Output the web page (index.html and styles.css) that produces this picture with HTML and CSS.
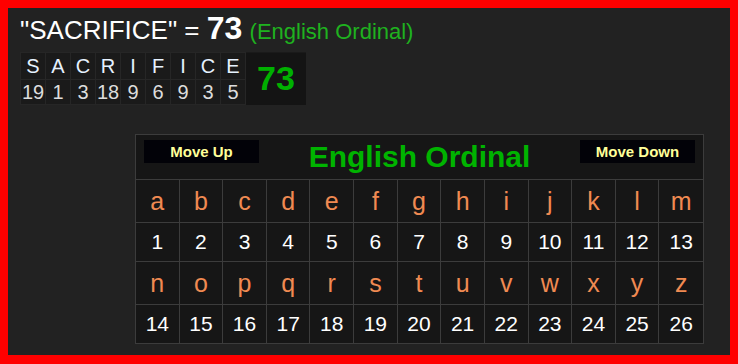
FILE: index.html
```html
<!DOCTYPE html>
<html>
<head>
<meta charset="utf-8">
<link rel="stylesheet" href="styles.css">
</head>
<body>
<div class="page">
  <div class="headline">"SACRIFICE" = <span class="total">73</span> <span class="cname">(English Ordinal)</span></div>
  <table class="breakdown">
    <tr class="letters">
      <td>S</td><td>A</td><td>C</td><td>R</td><td>I</td><td>F</td><td>I</td><td>C</td><td>E</td>
      <td class="sum" rowspan="2">73</td>
    </tr>
    <tr class="nums">
      <td>19</td><td>1</td><td>3</td><td>18</td><td>9</td><td>6</td><td>9</td><td>3</td><td>5</td>
    </tr>
  </table>
  <div class="cipher">
    <div class="cipher-head">
      <button class="move">Move Up</button>
      <div class="cipher-title">English Ordinal</div>
      <button class="move">Move Down</button>
    </div>
    <div class="grid">
      <div class="l">a</div><div class="l">b</div><div class="l">c</div><div class="l">d</div><div class="l">e</div><div class="l">f</div><div class="l">g</div><div class="l">h</div><div class="l">i</div><div class="l">j</div><div class="l">k</div><div class="l">l</div><div class="l">m</div>
      <div class="n">1</div><div class="n">2</div><div class="n">3</div><div class="n">4</div><div class="n">5</div><div class="n">6</div><div class="n">7</div><div class="n">8</div><div class="n">9</div><div class="n">10</div><div class="n">11</div><div class="n">12</div><div class="n">13</div>
      <div class="l">n</div><div class="l">o</div><div class="l">p</div><div class="l">q</div><div class="l">r</div><div class="l">s</div><div class="l">t</div><div class="l">u</div><div class="l">v</div><div class="l">w</div><div class="l">x</div><div class="l">y</div><div class="l">z</div>
      <div class="n">14</div><div class="n">15</div><div class="n">16</div><div class="n">17</div><div class="n">18</div><div class="n">19</div><div class="n">20</div><div class="n">21</div><div class="n">22</div><div class="n">23</div><div class="n">24</div><div class="n">25</div><div class="n">26</div>
    </div>
  </div>
</div>
</body>
</html>
```

FILE: styles.css
```css
html {
  background: #ff0000;
  margin: 0;
  padding: 0;
}
body {
  margin: 8px;
  height: 347px;
  background: #222222;
  font-family: "Liberation Sans", Arial, sans-serif;
  overflow: hidden;
}
.page {
  padding: 5px 0 0 12px;
}
.headline {
  color: #ffffff;
  font-size: 26px;
  line-height: 30px;
  height: 30px;
  white-space: nowrap;
}
.total {
  font-size: 32px;
  font-weight: bold;
}
.cname {
  color: #1fb21f;
  font-size: 22px;
}
.breakdown {
  margin-top: 9px;
  border-collapse: collapse;
  background: #1a1a1a;
}
.breakdown td {
  border: 1px solid #262626;
  padding: 0;
  width: 24px;
  text-align: center;
  font-size: 20px;
}
.letters td {
  height: 26px;
  color: #e6f2ff;
}
.nums td {
  height: 24px;
  color: #dddddd;
}
.breakdown td.sum {
  width: 60px;
  background: #141414;
  color: #00b000;
  font-weight: bold;
  font-size: 34px;
  border: none;
}
.cipher {
  margin: 29px 0 0 115px;
  width: 567px;
  border: 1px solid #3c3c3c;
  background: #161616;
}
.cipher-head {
  height: 44px;
  display: flex;
  justify-content: space-between;
  align-items: flex-start;
  padding: 0 8px 0 8px;
  border-bottom: 1px solid #3c3c3c;
}
.move {
  margin-top: 5px;
  width: 115px;
  height: 23px;
  background: #020208;
  color: #ffff99;
  border: none;
  font-family: "Liberation Sans", Arial, sans-serif;
  font-weight: bold;
  font-size: 15px;
  padding: 0;
}
.cipher-title {
  color: #00b300;
  font-weight: bold;
  font-size: 30px;
  line-height: 44px;
}
.grid {
  display: grid;
  grid-template-columns: repeat(13, 1fr);
  grid-template-rows: 43px 39px 43px 38px;
}
.grid div {
  display: flex;
  align-items: center;
  justify-content: center;
  border-right: 1px solid #3c3c3c;
  border-bottom: 1px solid #3c3c3c;
}
.grid div:nth-child(13n) {
  border-right: none;
}
.grid div:nth-last-child(-n+13) {
  border-bottom: none;
}
.l {
  color: #f08a52;
  font-size: 25px;
}
.n {
  color: #ffffff;
  font-size: 21px;
}
```
